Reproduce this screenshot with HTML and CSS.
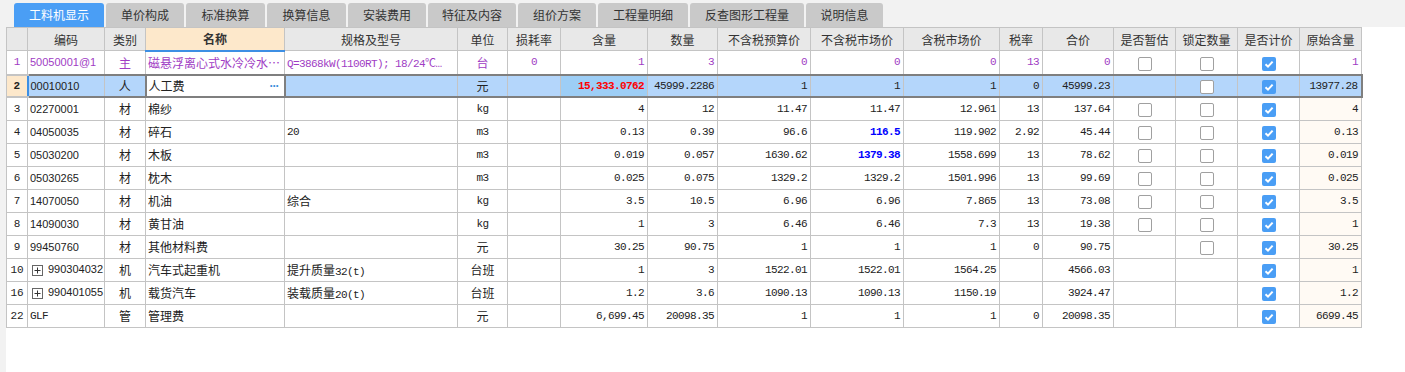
FILE: index.html
```html
<!DOCTYPE html>
<html lang="zh-CN">
<head>
  <meta charset="UTF-8">
  <title>工料机显示</title>
  <link rel="stylesheet" href="styles.css">
</head>
<body>
  <div class="tabs">
    <div class="tab active" style="width:90px">工料机显示</div>
    <div class="tab" style="width:78px">单价构成</div>
    <div class="tab" style="width:79px">标准换算</div>
    <div class="tab" style="width:79px">换算信息</div>
    <div class="tab" style="width:78px">安装费用</div>
    <div class="tab" style="width:88px">特征及内容</div>
    <div class="tab" style="width:78px">组价方案</div>
    <div class="tab" style="width:90px">工程量明细</div>
    <div class="tab" style="width:114px">反查图形工程量</div>
    <div class="tab" style="width:77px">说明信息</div>
  </div>

  <div class="main">
    <table class="grid">
      <colgroup>
        <col style="width:21px"><col style="width:77px"><col style="width:41px"><col style="width:139px">
        <col style="width:173px"><col style="width:50px"><col style="width:53px"><col style="width:87px">
        <col style="width:70px"><col style="width:93px"><col style="width:93px"><col style="width:96px">
        <col style="width:43px"><col style="width:71px"><col style="width:62px"><col style="width:62px">
        <col style="width:62px"><col style="width:62px">
      </colgroup>
      <thead>
        <tr>
          <th></th><th>编码</th><th>类别</th><th class="cur-col">名称</th><th>规格及型号</th><th>单位</th>
          <th>损耗率</th><th>含量</th><th>数量</th><th>不含税预算价</th><th>不含税市场价</th><th>含税市场价</th>
          <th>税率</th><th>合价</th><th>是否暂估</th><th>锁定数量</th><th>是否计价</th><th>原始含量</th>
        </tr>
      </thead>
      <tbody>
        <tr class="main-row">
          <td class="no">1</td><td class="code">50050001@1</td><td class="c">主</td>
          <td class="txt">磁悬浮离心式水冷冷水…</td>
          <td class="txt mono">Q=3868kW(1100RT); 18/24℃…</td>
          <td class="c">台</td><td class="c mono">0</td><td class="n">1</td><td class="n">3</td>
          <td class="n">0</td><td class="n">0</td><td class="n">0</td><td class="n">13</td><td class="n">0</td>
          <td class="c"><span class="cb"></span></td><td class="c"><span class="cb"></span></td>
          <td class="c"><span class="cb on"><svg width="14" height="14" viewBox="0 0 14 14"><path d="M3.5 7.2 L6 9.6 L10.6 4.6" fill="none" stroke="#fff" stroke-width="2"/></svg></span></td>
          <td class="n">1</td>
        </tr>
        <tr class="sel">
          <td class="no">2</td><td class="code first">00010010</td><td class="c">人</td>
          <td class="txt edit">人工费<span class="more">···</span></td>
          <td class="txt"></td><td class="c">元</td><td></td>
          <td class="n red focus">15,333.0762</td><td class="n">45999.2286</td>
          <td class="n">1</td><td class="n">1</td><td class="n">1</td><td class="n">0</td><td class="n">45999.23</td>
          <td></td><td class="c"><span class="cb"></span></td>
          <td class="c"><span class="cb on"><svg width="14" height="14" viewBox="0 0 14 14"><path d="M3.5 7.2 L6 9.6 L10.6 4.6" fill="none" stroke="#fff" stroke-width="2"/></svg></span></td>
          <td class="n last">13977.28</td>
        </tr>
        <tr>
          <td class="no">3</td><td class="code">02270001</td><td class="c">材</td><td class="txt">棉纱</td><td class="txt"></td>
          <td class="c mono">kg</td><td></td><td class="n">4</td><td class="n">12</td><td class="n">11.47</td><td class="n">11.47</td>
          <td class="n">12.961</td><td class="n">13</td><td class="n">137.64</td>
          <td class="c"><span class="cb"></span></td><td class="c"><span class="cb"></span></td>
          <td class="c"><span class="cb on"><svg width="14" height="14" viewBox="0 0 14 14"><path d="M3.5 7.2 L6 9.6 L10.6 4.6" fill="none" stroke="#fff" stroke-width="2"/></svg></span></td>
          <td class="n orig">4</td>
        </tr>
        <tr>
          <td class="no">4</td><td class="code">04050035</td><td class="c">材</td><td class="txt">碎石</td><td class="txt mono">20</td>
          <td class="c mono">m3</td><td></td><td class="n">0.13</td><td class="n">0.39</td><td class="n">96.6</td><td class="n blue">116.5</td>
          <td class="n">119.902</td><td class="n">2.92</td><td class="n">45.44</td>
          <td class="c"><span class="cb"></span></td><td class="c"><span class="cb"></span></td>
          <td class="c"><span class="cb on"><svg width="14" height="14" viewBox="0 0 14 14"><path d="M3.5 7.2 L6 9.6 L10.6 4.6" fill="none" stroke="#fff" stroke-width="2"/></svg></span></td>
          <td class="n orig">0.13</td>
        </tr>
        <tr>
          <td class="no">5</td><td class="code">05030200</td><td class="c">材</td><td class="txt">木板</td><td class="txt"></td>
          <td class="c mono">m3</td><td></td><td class="n">0.019</td><td class="n">0.057</td><td class="n">1630.62</td><td class="n blue">1379.38</td>
          <td class="n">1558.699</td><td class="n">13</td><td class="n">78.62</td>
          <td class="c"><span class="cb"></span></td><td class="c"><span class="cb"></span></td>
          <td class="c"><span class="cb on"><svg width="14" height="14" viewBox="0 0 14 14"><path d="M3.5 7.2 L6 9.6 L10.6 4.6" fill="none" stroke="#fff" stroke-width="2"/></svg></span></td>
          <td class="n orig">0.019</td>
        </tr>
        <tr>
          <td class="no">6</td><td class="code">05030265</td><td class="c">材</td><td class="txt">枕木</td><td class="txt"></td>
          <td class="c mono">m3</td><td></td><td class="n">0.025</td><td class="n">0.075</td><td class="n">1329.2</td><td class="n">1329.2</td>
          <td class="n">1501.996</td><td class="n">13</td><td class="n">99.69</td>
          <td class="c"><span class="cb"></span></td><td class="c"><span class="cb"></span></td>
          <td class="c"><span class="cb on"><svg width="14" height="14" viewBox="0 0 14 14"><path d="M3.5 7.2 L6 9.6 L10.6 4.6" fill="none" stroke="#fff" stroke-width="2"/></svg></span></td>
          <td class="n orig">0.025</td>
        </tr>
        <tr>
          <td class="no">7</td><td class="code">14070050</td><td class="c">材</td><td class="txt">机油</td><td class="txt">综合</td>
          <td class="c mono">kg</td><td></td><td class="n">3.5</td><td class="n">10.5</td><td class="n">6.96</td><td class="n">6.96</td>
          <td class="n">7.865</td><td class="n">13</td><td class="n">73.08</td>
          <td class="c"><span class="cb"></span></td><td class="c"><span class="cb"></span></td>
          <td class="c"><span class="cb on"><svg width="14" height="14" viewBox="0 0 14 14"><path d="M3.5 7.2 L6 9.6 L10.6 4.6" fill="none" stroke="#fff" stroke-width="2"/></svg></span></td>
          <td class="n orig">3.5</td>
        </tr>
        <tr>
          <td class="no">8</td><td class="code">14090030</td><td class="c">材</td><td class="txt">黄甘油</td><td class="txt"></td>
          <td class="c mono">kg</td><td></td><td class="n">1</td><td class="n">3</td><td class="n">6.46</td><td class="n">6.46</td>
          <td class="n">7.3</td><td class="n">13</td><td class="n">19.38</td>
          <td class="c"><span class="cb"></span></td><td class="c"><span class="cb"></span></td>
          <td class="c"><span class="cb on"><svg width="14" height="14" viewBox="0 0 14 14"><path d="M3.5 7.2 L6 9.6 L10.6 4.6" fill="none" stroke="#fff" stroke-width="2"/></svg></span></td>
          <td class="n orig">1</td>
        </tr>
        <tr>
          <td class="no">9</td><td class="code">99450760</td><td class="c">材</td><td class="txt">其他材料费</td><td class="txt"></td>
          <td class="c">元</td><td></td><td class="n">30.25</td><td class="n">90.75</td><td class="n">1</td><td class="n">1</td>
          <td class="n">1</td><td class="n">0</td><td class="n">90.75</td>
          <td></td><td class="c"><span class="cb"></span></td>
          <td class="c"><span class="cb on"><svg width="14" height="14" viewBox="0 0 14 14"><path d="M3.5 7.2 L6 9.6 L10.6 4.6" fill="none" stroke="#fff" stroke-width="2"/></svg></span></td>
          <td class="n orig">30.25</td>
        </tr>
        <tr>
          <td class="no">10</td><td class="code"><span class="plus"><svg width="11" height="11" viewBox="0 0 11 11"><rect x="0.5" y="0.5" width="10" height="10" fill="#fff" stroke="#666"/><path d="M2.5 5.5 H8.5 M5.5 2.5 V8.5" stroke="#333"/></svg></span>990304032</td>
          <td class="c">机</td><td class="txt">汽车式起重机</td><td class="txt">提升质量<span class="mono">32(t)</span></td>
          <td class="c">台班</td><td></td><td class="n">1</td><td class="n">3</td><td class="n">1522.01</td><td class="n">1522.01</td>
          <td class="n">1564.25</td><td></td><td class="n">4566.03</td>
          <td></td><td></td>
          <td class="c"><span class="cb on"><svg width="14" height="14" viewBox="0 0 14 14"><path d="M3.5 7.2 L6 9.6 L10.6 4.6" fill="none" stroke="#fff" stroke-width="2"/></svg></span></td>
          <td class="n orig">1</td>
        </tr>
        <tr>
          <td class="no">16</td><td class="code"><span class="plus"><svg width="11" height="11" viewBox="0 0 11 11"><rect x="0.5" y="0.5" width="10" height="10" fill="#fff" stroke="#666"/><path d="M2.5 5.5 H8.5 M5.5 2.5 V8.5" stroke="#333"/></svg></span>990401055</td>
          <td class="c">机</td><td class="txt">载货汽车</td><td class="txt">装载质量<span class="mono">20(t)</span></td>
          <td class="c">台班</td><td></td><td class="n">1.2</td><td class="n">3.6</td><td class="n">1090.13</td><td class="n">1090.13</td>
          <td class="n">1150.19</td><td></td><td class="n">3924.47</td>
          <td></td><td></td>
          <td class="c"><span class="cb on"><svg width="14" height="14" viewBox="0 0 14 14"><path d="M3.5 7.2 L6 9.6 L10.6 4.6" fill="none" stroke="#fff" stroke-width="2"/></svg></span></td>
          <td class="n orig">1.2</td>
        </tr>
        <tr>
          <td class="no">22</td><td class="code mono">GLF</td><td class="c">管</td><td class="txt">管理费</td><td class="txt"></td>
          <td class="c">元</td><td></td><td class="n">6,699.45</td><td class="n">20098.35</td><td class="n">1</td><td class="n">1</td>
          <td class="n">1</td><td class="n">0</td><td class="n">20098.35</td>
          <td></td><td></td>
          <td class="c"><span class="cb on"><svg width="14" height="14" viewBox="0 0 14 14"><path d="M3.5 7.2 L6 9.6 L10.6 4.6" fill="none" stroke="#fff" stroke-width="2"/></svg></span></td>
          <td class="n orig">6699.45</td>
        </tr>
      </tbody>
    </table>
  </div>
</body>
</html>
```

FILE: styles.css
```css
html, body {
  margin: 0;
  padding: 0;
  background: #fff;
}
body {
  font-family: "Liberation Sans", "Noto Sans CJK SC", sans-serif;
  font-size: 12px;
  color: #222;
  height: 372px;
  overflow: hidden;
}
.tabs {
  display: flex;
  gap: 2px;
  height: 27px;
  box-sizing: border-box;
  padding: 3px 0 0 14px;
  background: #f2f2f2;
}
.tab {
  height: 24px;
  line-height: 24px;
  text-align: center;
  background: #c9c9c9;
  color: #333;
  border-radius: 3px 3px 0 0;
  font-family: "Noto Sans CJK SC", sans-serif;
}
.tab.active {
  background: #4a9ef5;
  color: #fff;
}
.main {
  border-left: 6px solid #f2f2f2;
  height: 345px;
}
.grid {
  border-collapse: collapse;
  table-layout: fixed;
  width: 1356px;
}
.grid th, .grid td {
  border: 1px solid #c4c4c4;
  padding: 0;
  height: 22px;
  white-space: nowrap;
  overflow: hidden;
}
.grid th {
  background: #e8e8e8;
  font-weight: normal;
  color: #333;
  font-family: "Noto Sans CJK SC", sans-serif;
  text-align: center;
}
.grid th.cur-col {
  background: #fde8cb;
  font-weight: bold;
  border-bottom: 2px solid #3d8fe4;
  height: 21px;
}
.grid td {
  font-family: "Noto Sans CJK SC", sans-serif;
}
.no {
  text-align: center;
  font-family: "Liberation Mono", monospace !important;
  font-size: 11px;
}
.code {
  padding-left: 2px !important;
  font-family: "Liberation Sans", sans-serif !important;
  font-size: 11px;
}
.code.mono {
  font-family: "Liberation Mono", monospace !important;
}
.c {
  text-align: center;
}
.txt {
  padding-left: 2px !important;
}
.mono {
  font-family: "Liberation Mono", monospace !important;
  font-size: 11px;
  letter-spacing: -0.6px;
}
.n {
  text-align: right;
  padding-right: 3px !important;
  font-family: "Liberation Mono", monospace !important;
  font-size: 11px;
  letter-spacing: -0.6px;
}
.main-row td {
  color: #a03cc4;
}
.sel td {
  background: #b4d6fb;
  border-top: 2px solid #7f7f7f;
  border-bottom: 2px solid #7f7f7f;
  height: 20px;
}
.sel td.no {
  background: #fde8cb;
  font-weight: bold;
  border-top-color: #c4c4c4;
  border-bottom-color: #c4c4c4;
}
.sel td.first {
  border-left: 2px solid #3d8fe4;
}
.sel td.last {
  border-right: 2px solid #7f7f7f;
}
.sel td.edit {
  background: #fff;
  border: 2px solid #7f7f7f;
  position: relative;
}
.sel td.focus {
  background: #9dcef6;
}
.more {
  position: absolute;
  right: 5px;
  top: 3px;
  color: #3b8edb;
  font-family: "Liberation Sans", sans-serif;
  font-size: 12px;
  font-weight: bold;
  letter-spacing: -1px;
}
.red {
  color: #ff0000;
  font-weight: bold;
}
.blue {
  color: #0000ff;
  font-weight: bold;
}
.orig {
  background: #fffaf4;
}
.cb {
  display: inline-block;
  width: 14px;
  height: 14px;
  box-sizing: border-box;
  border: 1px solid #a0a0a0;
  border-radius: 2px;
  background: #fff;
  vertical-align: middle;
}
.cb.on {
  border: none;
  background: #4a9ef5;
}
.cb svg {
  display: block;
}
.plus {
  display: inline-block;
  vertical-align: middle;
  margin: 0 5px 0 2px;
}
.plus svg {
  display: block;
}
```
